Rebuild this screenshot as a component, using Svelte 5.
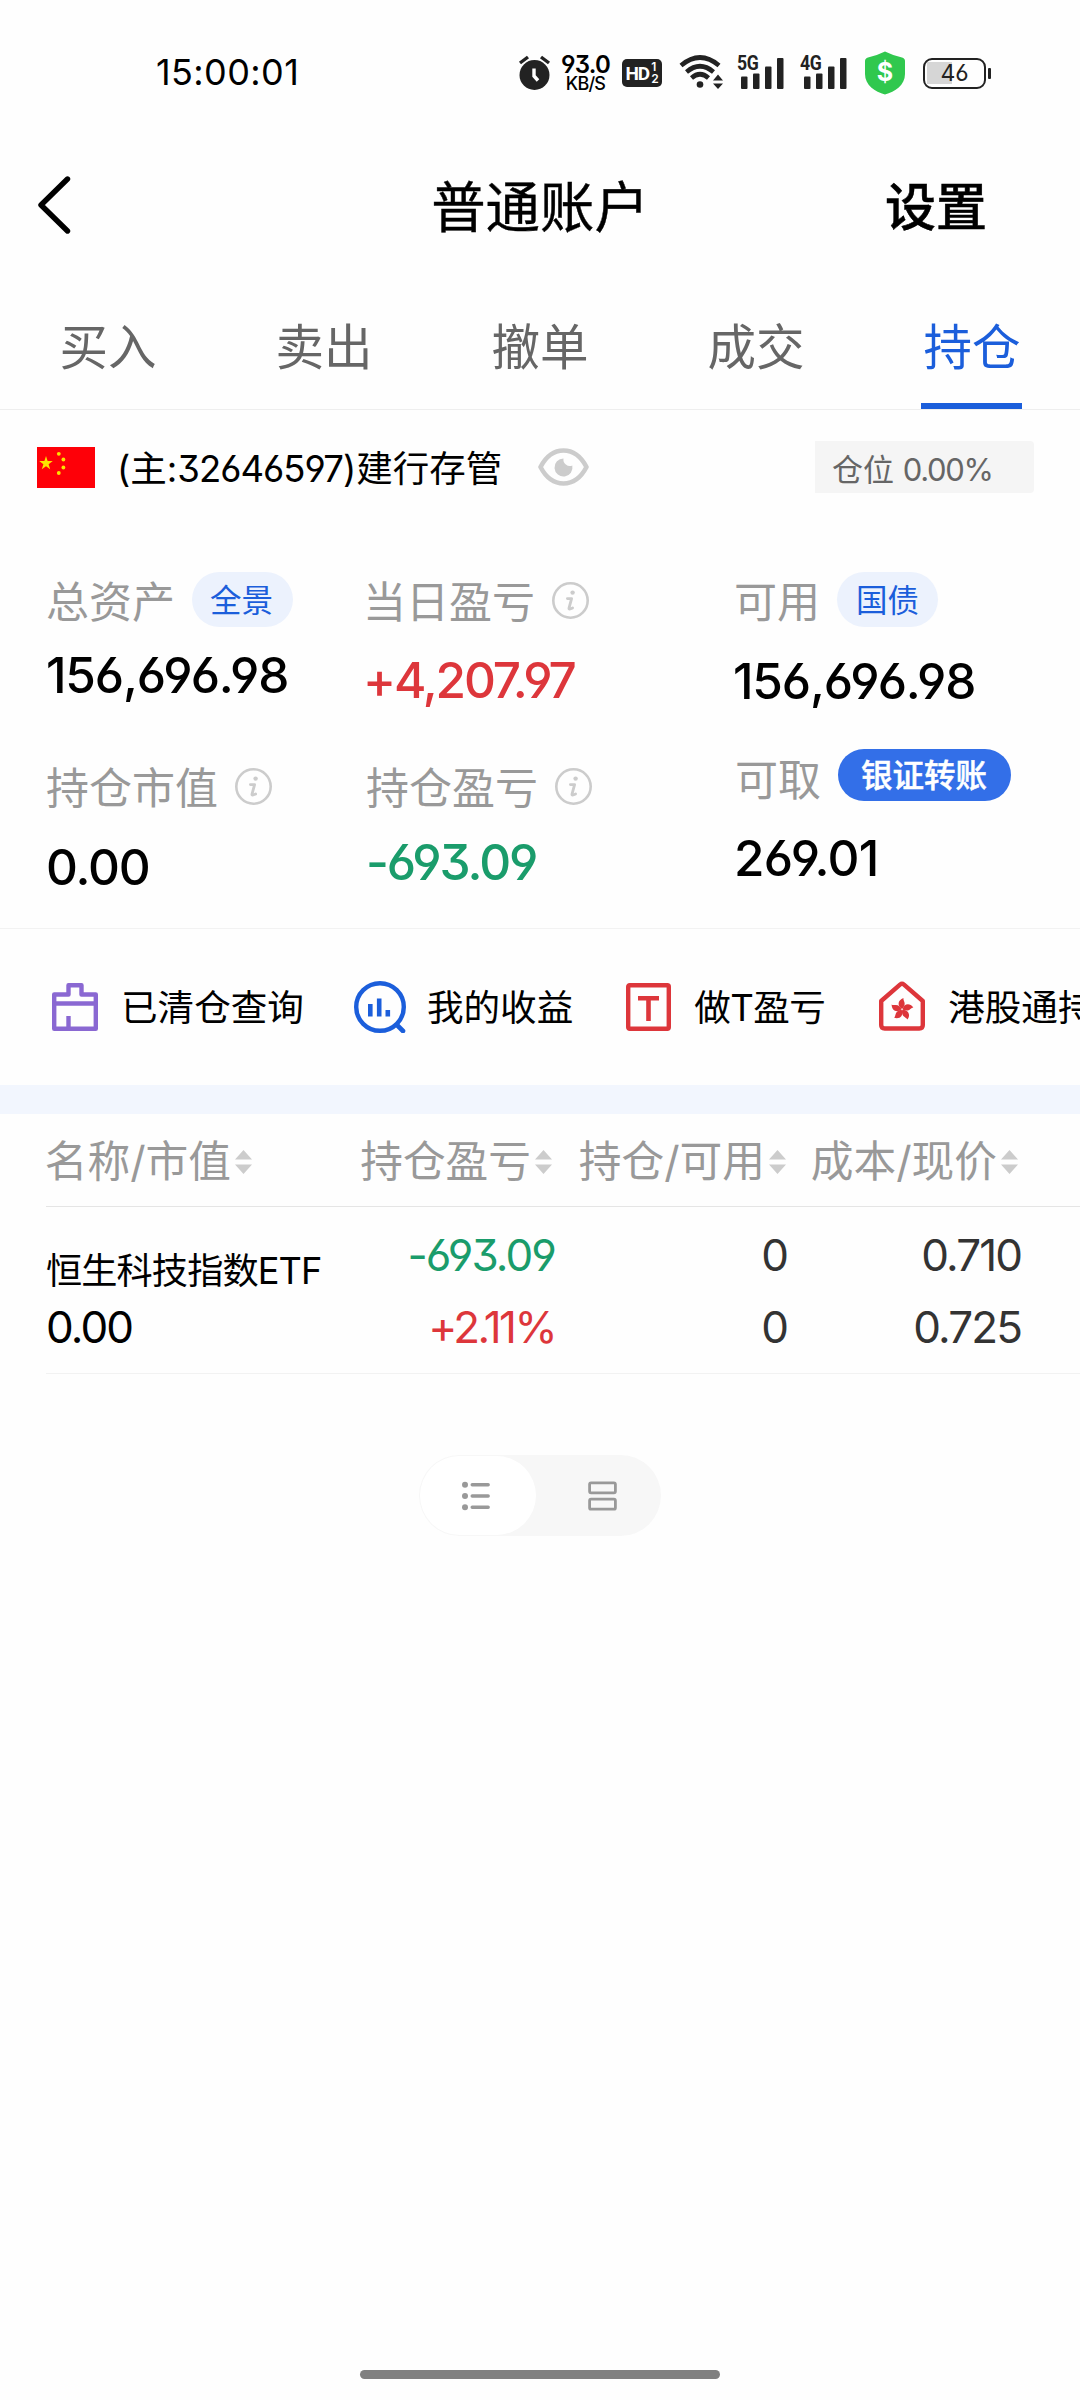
<script lang="ts">
    const tabs = ["买入", "卖出", "撤单", "成交", "持仓"];
    let activeTab = $state(4);

    const columns = ["名称/市值", "持仓盈亏", "持仓/可用", "成本/现价"];

    const holdings = [
        {
            name: "恒生科技指数ETF",
            value: "0.00",
            profit: "-693.09",
            rate: "+2.11%",
            amount: "0",
            available: "0",
            cost: "0.710",
            price: "0.725",
        },
    ];

    const signals = ["5G", "4G"];
    let view = $state("list");
</script>

{#snippet info()}
    <svg class="info" viewBox="0 0 37 37">
        <circle cx="18.5" cy="18.5" r="17.2" fill="none" stroke="#ccc" stroke-width="2.6" />
        <circle cx="20.6" cy="10.6" r="2.2" fill="#ccc" />
        <path d="M15.4 16.6h4.2l-2.6 9.6q-.4 1.8 3.6-.2" fill="none" stroke="#ccc" stroke-width="2.8" stroke-linecap="round" stroke-linejoin="round" />
    </svg>
{/snippet}

<div class="screen">
    <div class="status">
        <span class="time">15:00:01</span>
        <div class="status-icons">
            <svg class="alarm" width="34" height="36" viewBox="0 0 34 36">
                <circle cx="16.5" cy="20" r="15" fill="#222" />
                <path d="M2 8l8-6M31 8l-8-6" stroke="#222" stroke-width="3.4" />
                <path d="M16 13.5v7.5l4 4.5" fill="none" stroke="#fff" stroke-width="3.4" />
            </svg>
            <div class="speed">
                <b>93.0</b>
                <span>KB/S</span>
            </div>
            <div class="hd"><span>HD</span><div class="hd-nums"><i>1</i><i>2</i></div></div>
            <svg class="wifi" width="46" height="36" viewBox="0 0 46 36">
                <g fill="none" stroke="#222" stroke-width="4.6">
                    <path d="M2 11.5Q21 -4.5 40 11.5" />
                    <path d="M7.5 18Q21 6.5 34.5 18" />
                    <path d="M12.5 24Q21 16.5 29.5 24" />
                </g>
                <circle cx="21" cy="30.5" r="3.3" fill="#222" />
                <path d="M34 26.5l5-6 5 6zM34 29.5h10l-5 5.5z" fill="#222" />
            </svg>
            {#each signals as signal}
                <div class="signal">
                    <span>{signal}</span>
                    <svg width="43" height="31" viewBox="0 0 43 31" fill="#222">
                        <rect x="0" y="18.5" width="6.5" height="12.5" rx="1" />
                        <rect x="12" y="15.5" width="6.5" height="15.5" rx="1" />
                        <rect x="24" y="8.5" width="6.5" height="22.5" rx="1" />
                        <rect x="36" y="0" width="6.5" height="31" rx="1" />
                    </svg>
                </div>
            {/each}
            <div class="shield">
                <svg width="40" height="44" viewBox="0 0 40 44">
                    <path d="M20 .5Q28 4.5 37 6.5Q40 7.5 40 10V23C40 34 30 41 20 43.5C10 41 0 34 0 23V10Q0 7.5 3 6.5Q12 4.5 20 .5z" fill="#30c84e" />
                </svg>
                <span>$</span>
            </div>
            <div class="battery"><span>46</span></div>
        </div>
    </div>

    <header>
        <svg width="36" height="60" viewBox="0 0 36 60">
            <path d="M31.5 3L5 29l26.5 26" fill="none" stroke="#000" stroke-width="5.4" stroke-linecap="round" stroke-linejoin="round" />
        </svg>
        <h1>普通账户</h1>
        <span class="settings">设置</span>
    </header>

    <nav>
        {#each tabs as tab, i}
            <button class:active={i === activeTab} onclick={() => (activeTab = i)}>{tab}</button>
        {/each}
    </nav>

    <div class="account">
        <svg class="flag" width="58" height="41" viewBox="0 0 58 41">
            <rect width="58" height="41" fill="#fe0008" />
            <g fill="#fce300">
                <path d="M9 9l1.6 5.1h5.2l-4.2 3.1 1.6 5.1L9 19.2l-4.2 3.1 1.6-5.1L2.2 14.1h5.2z" />
                <circle cx="21.8" cy="6.8" r="1.9" />
                <circle cx="26.4" cy="12.5" r="1.9" />
                <circle cx="26.4" cy="20.5" r="1.9" />
                <circle cx="21.8" cy="26" r="1.9" />
            </g>
        </svg>
        <span class="account-name">(主:<em>32646597</em>)建行存管</span>
        <svg class="eye" width="51" height="38" viewBox="0 0 51 38">
            <path d="M2.5 19C8 8.5 16 2.5 25.5 2.5S43 8.5 48.5 19C43 29.5 35 35.5 25.5 35.5S8 29.5 2.5 19z" fill="none" stroke="#ccc" stroke-width="4.6" stroke-linejoin="round" />
            <path d="M25.500 10.500A9 9 0 1 0 34.300 17.600A6.500 6.500 0 0 1 25.500 10.500z" fill="#ccc" />
        </svg>
        <span class="position">仓位 <em>0.00%</em></span>
    </div>

    <section class="summary">
        <div class="col assets">
            <div class="label">总资产 <span class="pill">全景</span></div>
            <div class="num">156,696.98</div>
            <div class="label second">持仓市值 {@render info()}</div>
            <div class="num">0.00</div>
        </div>
        <div class="col profit">
            <div class="label">当日盈亏 {@render info()}</div>
            <div class="num up">+4,207.97</div>
            <div class="label second">持仓盈亏 {@render info()}</div>
            <div class="num down">-693.09</div>
        </div>
        <div class="col cash">
            <div class="label">可用 <span class="pill">国债</span></div>
            <div class="num">156,696.98</div>
            <div class="label second">可取 <span class="pill solid">银证转账</span></div>
            <div class="num">269.01</div>
        </div>
    </section>

    <div class="shortcuts">
        <svg width="46" height="48" viewBox="0 0 46 48">
            <g fill="none" stroke="#8a68d2" stroke-width="4.4" stroke-linejoin="round">
                <path d="M2.2 11.5H16.5V2.2H29.5V11.5H43.8V45.8H2.2z" />
                <path d="M2.2 20.5H43.8M16.5 33v13" />
            </g>
        </svg>
        <span class="cleared">已清仓查询</span>
        <svg width="52" height="52" viewBox="0 0 52 52">
            <circle cx="26" cy="26" r="23.8" fill="none" stroke="#1b5edb" stroke-width="4.4" />
            <path d="M43 44l6 6" stroke="#1b5edb" stroke-width="4.6" stroke-linecap="round" />
            <path d="M16.3 23v12.5M25.2 17.5v18M33.8 29v6.5" stroke="#1b5edb" stroke-width="4.6" />
        </svg>
        <span class="income">我的收益</span>
        <svg width="45" height="48" viewBox="0 0 45 48">
            <rect x="2.2" y="2.2" width="40.6" height="43.6" rx="1.5" fill="none" stroke="#dd363b" stroke-width="4.4" />
            <path d="M12 15.2h21M22.5 13v25" stroke="#dd363b" stroke-width="4.6" />
        </svg>
        <span class="day-trade">做T盈亏</span>
        <svg class="house" width="46" height="50" viewBox="0 0 46 50">
            <path d="M2.2 44V20L21 3.6q2-1.6 4 0L43.8 20V44q0 3.5-3.5 3.5H5.7q-3.5 0-3.5-3.5z" fill="none" stroke="#dd363b" stroke-width="4.4" stroke-linejoin="round" />
            {#each [10, 82, 154, 226, 298] as angle}
                <path d="M23 28c-5.500-2-6-8-.5-11c-.5 2.500 5 5 .5 11z" transform="rotate({angle} 23 28.5)" fill="#dd363b" />
            {/each}
        </svg>
        <span>港股通持仓</span>
    </div>

    <div class="band"></div>

    <div class="table">
        <div class="row head">
            {#each columns as column}
                <div class="cell">
                    {column}
                    <svg width="17" height="24" viewBox="0 0 17 24" fill="#ccc">
                        <path d="M8.5 0L17 9.5H0zM0 14.5h17l-8.5 9.5z" />
                    </svg>
                </div>
            {/each}
        </div>
        {#each holdings as item}
            <div class="row item">
                <div class="cell name"><span>{item.name}</span><b>{item.value}</b></div>
                <div class="cell"><b class="down">{item.profit}</b><b class="up rate">{item.rate}</b></div>
                <div class="cell amount"><b>{item.amount}</b><b>{item.available}</b></div>
                <div class="cell"><b>{item.cost}</b><b>{item.price}</b></div>
            </div>
        {/each}
    </div>

    <div class="switch">
        <button class:on={view === "list"} onclick={() => (view = "list")} aria-label="list">
            <svg width="28" height="30" viewBox="0 0 28 30">
                <g fill="#999">
                    <circle cx="3" cy="3.7" r="3" />
                    <circle cx="3" cy="15" r="3" />
                    <circle cx="3" cy="26.3" r="3" />
                </g>
                <path d="M10.2 3.7h16M10.2 15h16M10.2 26.3h16" stroke="#999" stroke-width="3.4" stroke-linecap="round" />
            </svg>
        </button>
        <button class:on={view === "card"} onclick={() => (view = "card")} aria-label="card">
            <svg width="29" height="30" viewBox="0 0 29 30" fill="none" stroke="#999" stroke-width="2.8">
                <rect x="1.6" y="1.8" width="25.8" height="10" rx="1.5" />
                <rect x="1.6" y="18.2" width="25.8" height="10" rx="1.5" />
            </svg>
        </button>
    </div>

    <div class="home-bar"></div>
</div>

<style>
    :global(body) {
        margin: 0;
        background: #fefefe;
    }

    .screen {
        width: 1080px;
        height: 2400px;
        display: flex;
        flex-direction: column;
        overflow: hidden;
        background: #fefefe;
        color: #000;
        font-family: Inter, "Noto Sans CJK SC", sans-serif;
        font-feature-settings: "cv03", "cv04", "cv09";
        line-height: 1.2;
        white-space: nowrap;
    }

    svg {
        display: block;
        flex: none;
    }

    em, i, b {
        font-style: normal;
        font-weight: 400;
    }

    button {
        border: 0;
        padding: 0;
        background: none;
        font: inherit;
    }

    .status {
        height: 146px;
        display: flex;
        align-items: center;
        justify-content: space-between;
        padding: 0 88px 0 156px;
        box-sizing: border-box;
    }

    .time {
        font-size: 36px;
        letter-spacing: 0.4px;
    }

    .status-icons {
        display: flex;
        align-items: center;
        color: #222;
    }

    .speed {
        width: 49px;
        margin: 2px 1px 0 9px;
        display: flex;
        flex-direction: column;
        align-items: center;
        color: #000;
    }

    .speed b {
        font-size: 24px;
        line-height: 19px;
        font-weight: 600;
        letter-spacing: -0.8px;
    }

    .speed span {
        font-size: 18px;
        line-height: 19px;
        font-weight: 500;
        letter-spacing: -0.8px;
    }

    .hd {
        width: 40px;
        height: 28px;
        margin-left: 11px;
        border-radius: 5px;
        background: #222;
        color: #fff;
        display: flex;
        align-items: center;
        justify-content: center;
    }

    .hd span {
        font: 700 19px Roboto, sans-serif;
        letter-spacing: -1px;
        margin-right: 2px;
    }

    .hd-nums {
        display: flex;
        flex-direction: column;
    }

    .hd-nums i {
        font-size: 12px;
        line-height: 12px;
        font-weight: 600;
    }

    .wifi {
        margin: -2px 0 0 17px;
    }

    .signal {
        position: relative;
        margin-left: 16px;
    }

    .signal + .signal {
        margin-left: 20px;
    }

    .signal span {
        position: absolute;
        left: -4px;
        top: -3px;
        font: 700 21px/17px Roboto, sans-serif;
        letter-spacing: -0.5px;
        transform: scaleX(0.84);
        transform-origin: left;
    }

    .shield {
        position: relative;
        margin-left: 18px;
    }

    .shield span {
        position: absolute;
        inset: 0;
        text-align: center;
        font-size: 25px;
        line-height: 42px;
        font-weight: 700;
        color: #fff;
    }

    .battery {
        position: relative;
        box-sizing: border-box;
        width: 63px;
        height: 31px;
        margin: 0 6px 0 18px;
        border: 2.5px solid #222;
        border-radius: 9px;
        padding: 2px;
        font-size: 23px;
        text-align: center;
        line-height: 22px;
        background: linear-gradient(#d6d6d6, #d6d6d6) 2px 2px / 25px 22px no-repeat;
    }

    .battery::after {
        content: "";
        position: absolute;
        right: -6.5px;
        top: 8px;
        width: 3px;
        height: 11px;
        border-radius: 1px;
        background: #222;
    }

    header {
        height: 120px;
        display: flex;
        align-items: center;
        justify-content: space-between;
        padding: 0 93px 0 36px;
        position: relative;
    }

    h1 {
        margin: 3px 0 0;
        font-size: 54.4px;
        font-weight: 400;
        -webkit-text-stroke: 0.4px;
        position: absolute;
        left: 0;
        right: 0;
        text-align: center;
    }

    .settings {
        margin-top: 3px;
        font-size: 51px;
        font-weight: 500;
        -webkit-text-stroke: 0.5px;
    }

    nav {
        height: 144px;
        box-sizing: border-box;
        border-bottom: 1px solid #eee;
        display: flex;
    }

    nav button {
        width: 216px;
        font-size: 48.5px;
        line-height: 60px;
        color: #666;
        padding-top: 21px;
        position: relative;
    }

    nav button.active {
        color: #1b5edb;
    }

    nav button.active::after {
        content: "";
        position: absolute;
        left: 57px;
        bottom: 0;
        width: 101px;
        height: 6px;
        background: #1b5edb;
    }

    .account {
        height: 114px;
        display: flex;
        align-items: center;
        padding: 0 46px 0 37px;
    }

    .account-name {
        font-size: 36.5px;
        margin: 5px 0 0 22px;
    }

    .account-name em {
        letter-spacing: -1px;
    }

    .eye {
        margin-left: 36px;
    }

    .position {
        box-sizing: border-box;
        width: 219px;
        height: 52px;
        margin-left: auto;
        padding: 4px 0 0 17px;
        border-radius: 0 4px 4px 0;
        background: #f5f5f5;
        font-size: 31px;
        line-height: 50px;
        color: #666;
    }

    .position em {
        letter-spacing: -1.3px;
    }

    .summary {
        height: 405px;
        box-sizing: border-box;
        border-bottom: 1px solid #f2f2f2;
        display: flex;
        padding-left: 46px;
    }

    .col {
        display: flex;
        flex-direction: column;
    }

    .assets {
        width: 317px;
    }

    .profit {
        width: 371px;
    }

    .label {
        display: flex;
        align-items: center;
        height: 58px;
        padding-top: 2px;
        margin-top: 48px;
        font-size: 43px;
        color: #999;
    }

    .num {
        height: 60px;
        font-size: 49.5px;
        line-height: 60px;
        font-weight: 500;
        letter-spacing: -1.2px;
    }

    .assets .num {
        margin-top: 13px;
    }

    .profit .num {
        margin-top: 18px;
        letter-spacing: -2.1px;
    }

    .cash .num {
        margin: 19px 0 0 -1px;
    }

    .assets .second {
        margin-top: 53px;
    }

    .assets .second + .num {
        margin-top: 19px;
    }

    .profit .second {
        margin: 48px 0 0 3px;
    }

    .profit .second + .num {
        margin: 14px 0 0 3px;
    }

    .cash .second {
        margin: 39px 0 0 1px;
    }

    .cash .second + .num {
        margin: 18px 0 0;
        letter-spacing: -0.7px;
    }

    .pill {
        margin-left: 17px;
        padding: 0 19px;
        height: 55px;
        line-height: 57px;
        border-radius: 28px;
        background: #ecf2fd;
        color: #1b5edb;
        font-size: 31.5px;
        margin-top: -8px;
    }

    .assets .pill {
        padding: 0 20px 0 18px;
    }

    .pill.solid {
        padding: 0 24px 0 23px;
        height: 52px;
        line-height: 54px;
        margin-top: -12px;
        background: #336fe8;
        color: #fff;
        font-weight: 500;
        -webkit-text-stroke: 0.5px;
    }

    .info {
        width: 37px;
        height: 37px;
        margin: -6px 0 0 17px;
    }

    .up {
        color: #dd363b;
    }

    .down {
        color: #1a9c6b;
    }

    .shortcuts {
        height: 156px;
        display: flex;
        align-items: center;
        padding-left: 52px;
        font-size: 36.6px;
    }

    .shortcuts span {
        margin: 4px 0 0 23px;
    }

    .shortcuts .cleared {
        margin-right: 50px;
    }

    .shortcuts .income {
        margin-left: 21px;
        margin-right: 53px;
    }

    .shortcuts .day-trade {
        margin-right: 54px;
        letter-spacing: -0.6px;
    }

    .shortcuts .house {
        margin-top: -3px;
    }

    .band {
        height: 29px;
        background: #f2f6fe;
    }

    .table {
        margin-left: 46px;
    }

    .row {
        display: grid;
        grid-template-columns: 206px 300px 234px 232px;
    }

    .head {
        height: 92px;
        border-bottom: 1px solid #e5e5e5;
        font-size: 42.7px;
        color: #999;
    }

    .head .cell {
        display: flex;
        align-items: center;
        justify-content: flex-end;
        gap: 4px;
        padding-top: 4px;
    }

    .head svg {
        margin-top: -1px;
    }

    .item {
        height: 166px;
        border-bottom: 1px solid #f2f2f2;
        color: #333;
    }

    .item .cell {
        display: flex;
        flex-direction: column;
        align-items: flex-end;
        padding-top: 12px;
        margin-right: -3px;
    }

    .item .amount {
        margin-right: -1px;
    }

    .item .name {
        align-items: flex-start;
        color: #000;
    }

    .item b {
        font-size: 44px;
        line-height: 72px;
        letter-spacing: -1.9px;
    }

    .item .rate {
        letter-spacing: -2.6px;
    }

    .item span {
        font-size: 36.2px;
        line-height: 72px;
        letter-spacing: -0.9px;
        padding-top: 16px;
        margin-bottom: -16px;
    }

    .switch {
        display: flex;
        align-self: center;
        width: 242px;
        height: 81px;
        margin-top: 81px;
        border-radius: 41px;
        background: #f7f7f7;
    }

    .switch button {
        box-sizing: border-box;
        width: 116px;
        margin: 1px;
        padding-right: 5px;
        display: flex;
        align-items: center;
        justify-content: center;
        border-radius: 40px;
    }

    .switch button + button {
        flex: 1;
        padding: 0 0 0 7px;
    }

    .switch .on {
        background: #fff;
    }

    .home-bar {
        width: 360px;
        height: 9px;
        margin: auto auto 21px;
        border-radius: 5px;
        background: #808080;
    }
</style>
